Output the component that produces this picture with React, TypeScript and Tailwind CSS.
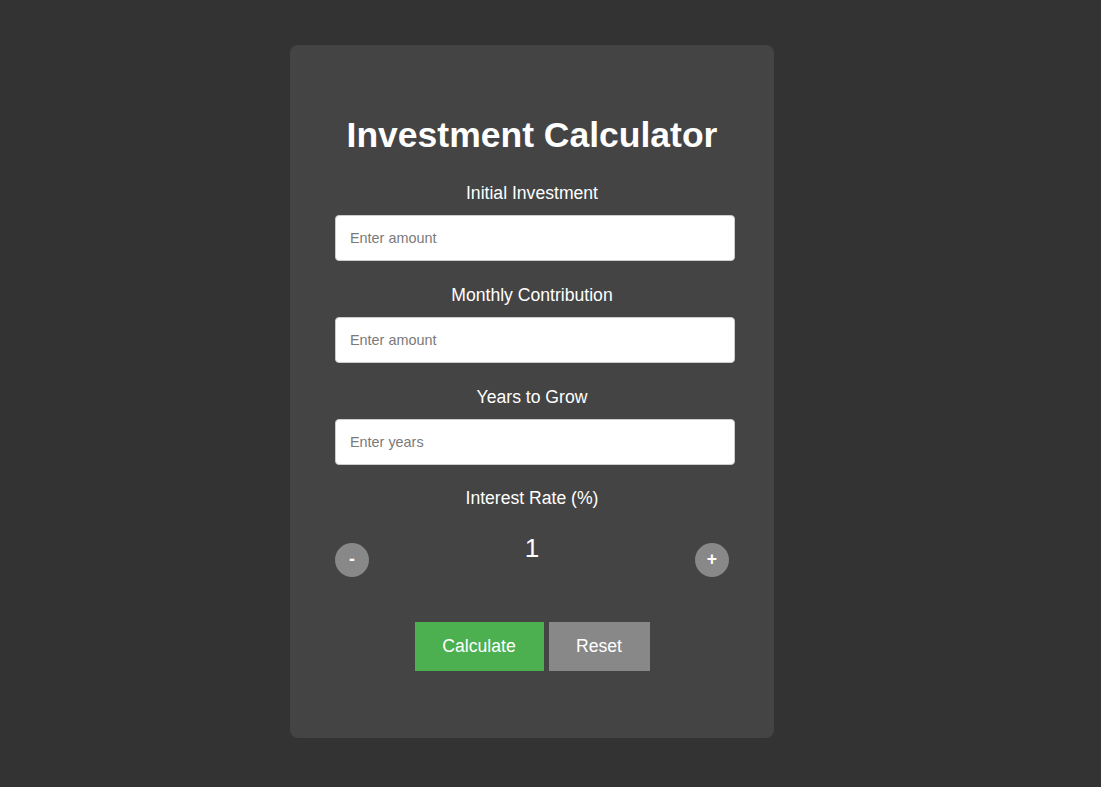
import { useState } from "react";

const fields = [
    { label: "Initial Investment", placeholder: "Enter amount" },
    { label: "Monthly Contribution", placeholder: "Enter amount" },
    { label: "Years to Grow", placeholder: "Enter years" },
];

export default function App() {
    const [rate, setRate] = useState(1);

    return (
        <div className="min-h-screen bg-[#333333] pl-[290px] pt-[45px] font-['Liberation_Sans',Arial,sans-serif] text-white">
            {/* Card */}
            <div className="w-[484px] rounded-[8px] bg-[#444444] px-[45px] pt-[70px] pb-[67px]">
                <h1 className="text-center text-[35.5px] leading-[40px] font-bold">Investment Calculator</h1>

                <div className="mt-[27px] flex flex-col gap-[23.4px]">
                    {fields.map((f) => (
                        <div key={f.label} className="flex flex-col">
                            <label className="pt-[1px] text-center text-[17.6px] leading-[20px]">{f.label}</label>
                            <input
                                type="text"
                                placeholder={f.placeholder}
                                className="mt-[11.6px] h-[46px] w-[400px] rounded-[4px] border border-[#cccccc] bg-white px-[14px] text-[14.4px] text-[#333] outline-none placeholder:text-[#7a7a7a]"
                            />
                        </div>
                    ))}

                    <div className="flex flex-col">
                        <label className="text-center text-[17.6px] leading-[20px]">Interest Rate (%)</label>
                        {/* Rate stepper */}
                        <div className="mt-[24.6px] flex items-start justify-between">
                            <button
                                onClick={() => setRate(rate - 1)}
                                className="mt-[10px] flex h-[34px] w-[34px] items-center justify-center rounded-full bg-[#888888] text-[17.6px] font-bold text-white"
                            >
                                -
                            </button>
                            <span className="text-[26px] leading-[30px]">{rate}</span>
                            <button
                                onClick={() => setRate(rate + 1)}
                                className="mt-[10px] flex h-[34px] w-[34px] items-center justify-center rounded-full bg-[#888888] text-[17.6px] font-bold text-white"
                            >
                                +
                            </button>
                        </div>
                    </div>
                </div>

                {/* Actions */}
                <div className="mt-[45px] flex justify-center gap-[5px]">
                    <button className="h-[49px] w-[129px] bg-[#4caf50] text-[17.6px] text-white">Calculate</button>
                    <button className="h-[49px] w-[101px] bg-[#888888] text-[17.6px] text-white">Reset</button>
                </div>
            </div>
        </div>
    );
}
